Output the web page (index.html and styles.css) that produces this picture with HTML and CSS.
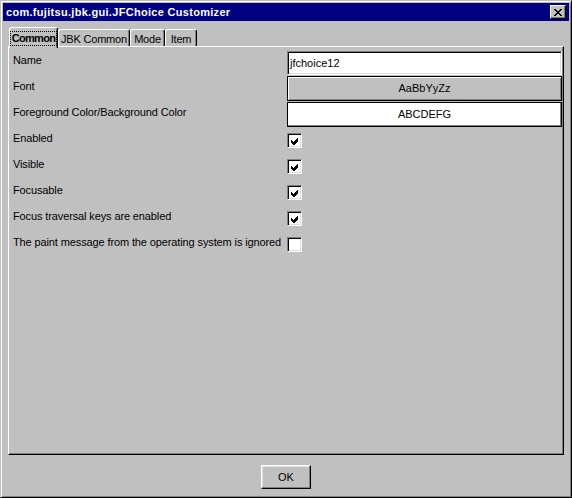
FILE: index.html
```html
<!DOCTYPE html>
<html lang="en">
<head>
    <meta charset="UTF-8">
    <title>com.fujitsu.jbk.gui.JFChoice Customizer</title>
    <link rel="stylesheet" href="styles.css">
</head>
<body>

    <div class="window">
        <!-- 标题栏 -->
        <div class="titlebar">
            <span class="title">com.fujitsu.jbk.gui.JFChoice Customizer</span>
            <div class="close">
                <svg width="8" height="7" viewBox="0 0 8 7" shape-rendering="crispEdges">
                    <path d="M0 0h2v1h1v1h2v-1h1v-1h2v1h-1v1h-1v1h-1v1h1v1h1v1h1v1h-2v-1h-1v-1h-2v1h-1v1h-2v-1h1v-1h1v-1h1v-1h-1v-1h-1v-1h-1z" fill="#000"/>
                </svg>
            </div>
        </div>

        <!-- 标签页 -->
        <div class="tabs">
            <div class="tab active w-common"><span class="focus">Common</span></div>
            <div class="tab w-jbk">JBK Common</div>
            <div class="tab w-mode">Mode</div>
            <div class="tab w-item">Item</div>
        </div>

        <div class="panel">
            <div class="row">
                <div class="label">Name</div>
                <div class="control"><div class="textfield">jfchoice12</div></div>
            </div>
            <div class="row">
                <div class="label">Font</div>
                <div class="control"><div class="fontbtn">AaBbYyZz</div></div>
            </div>
            <div class="row">
                <div class="label">Foreground Color/Background Color</div>
                <div class="control"><div class="colorbtn">ABCDEFG</div></div>
            </div>
            <div class="row">
                <div class="label">Enabled</div>
                <div class="control"><span class="check"><svg width="8" height="7" viewBox="0 0 8 7" shape-rendering="crispEdges"><polygon points="0,2 2,4 6,0 7,0 7,3 3,7 2,7 0,5" fill="#000"/></svg></span></div>
            </div>
            <div class="row">
                <div class="label">Visible</div>
                <div class="control"><span class="check"><svg width="8" height="7" viewBox="0 0 8 7" shape-rendering="crispEdges"><polygon points="0,2 2,4 6,0 7,0 7,3 3,7 2,7 0,5" fill="#000"/></svg></span></div>
            </div>
            <div class="row">
                <div class="label">Focusable</div>
                <div class="control"><span class="check"><svg width="8" height="7" viewBox="0 0 8 7" shape-rendering="crispEdges"><polygon points="0,2 2,4 6,0 7,0 7,3 3,7 2,7 0,5" fill="#000"/></svg></span></div>
            </div>
            <div class="row">
                <div class="label">Focus traversal keys are enabled</div>
                <div class="control"><span class="check"><svg width="8" height="7" viewBox="0 0 8 7" shape-rendering="crispEdges"><polygon points="0,2 2,4 6,0 7,0 7,3 3,7 2,7 0,5" fill="#000"/></svg></span></div>
            </div>
            <div class="row">
                <div class="label">The paint message from the operating system is ignored</div>
                <div class="control"><span class="check"></span></div>
            </div>
        </div>

        <!-- 底部按钮 -->
        <div class="footer">
            <div class="btn">OK</div>
        </div>
    </div>

</body>
</html>
```

FILE: styles.css
```css
body {
    margin: 0;
    padding: 0;
    font-family: "Liberation Sans", Arial, sans-serif;
    font-size: 11px;
    color: #000;
    background-color: #c0c0c0;
}

/* 窗口外框 */
.window {
    width: 572px;
    height: 498px;
    box-sizing: border-box;
    border: 1px solid;
    border-color: #c0c0c0 #000 #000 #c0c0c0;
    box-shadow: inset 1px 1px #fff, inset -1px -1px #808080;
    padding: 2px;
    background-color: #c0c0c0;
    display: flex;
    flex-direction: column;
}

/* 标题栏 */
.titlebar {
    height: 18px;
    background-color: #000080;
    color: #fff;
    display: flex;
    align-items: center;
    justify-content: space-between;
    padding: 0 3px 0 3px;
}

.title {
    font-weight: bold;
    font-size: 11px;
    letter-spacing: 0.3px;
}

.close {
    width: 16px;
    height: 14px;
    box-sizing: border-box;
    background-color: #c0c0c0;
    border: 1px solid;
    border-color: #fff #000 #000 #fff;
    box-shadow: inset -1px -1px #808080;
    display: flex;
    align-items: center;
    justify-content: center;
}

/* 标签页 */
.tabs {
    display: flex;
    align-items: flex-end;
    height: 19px;
    margin: 6px 5px 0 5px;
    padding-left: 1px;
}

.tab {
    height: 17px;
    box-sizing: border-box;
    border-top: 1px solid #fff;
    border-left: 1px solid #fff;
    border-right: 1px solid #000;
    border-radius: 3px 3px 0 0;
    box-shadow: inset -1px 0 #808080;
    display: flex;
    align-items: center;
    justify-content: center;
    background-color: #c0c0c0;
    letter-spacing: -0.2px;
    padding-top: 1px;
}

.tab.active {
    height: 21px;
    margin-bottom: -2px;
    position: relative;
    z-index: 1;
    font-weight: bold;
    padding: 1px 0 1px 0;
    letter-spacing: -0.7px;
}

.focus {
    outline: 1px dotted #000;
    padding: 0 1px;
    line-height: 13px;
}

.w-common { width: 49px; }
.w-jbk { width: 72px; }
.w-mode { width: 35px; }
.w-item { width: 32px; }

/* 内容面板 */
.panel {
    flex: 1;
    margin: 0 5px;
    border: 1px solid;
    border-color: #fff #000 #000 #fff;
    box-shadow: inset -1px -1px #808080;
    padding: 3px 1px 0 1px;
}

.row {
    display: flex;
    height: 26px;
}

.label {
    width: 277px;
    box-sizing: border-box;
    padding: 4px 0 0 3px;
    line-height: 13px;
    white-space: nowrap;
    letter-spacing: -0.12px;
}

.control {
    flex: 1;
}

.textfield {
    height: 24px;
    margin-top: 1px;
    box-sizing: border-box;
    background-color: #fff;
    border: 1px solid;
    border-color: #808080 #fff #fff #808080;
    box-shadow: inset 1px 1px #000, inset -1px -1px #dfdfdf;
    padding-left: 2px;
    line-height: 22px;
}

.fontbtn,
.colorbtn {
    height: 25px;
    box-sizing: border-box;
    border: 1px solid #000;
    text-align: center;
    line-height: 23px;
}

.fontbtn {
    background-color: #c0c0c0;
    box-shadow: inset 1px 1px #fff, inset -1px -1px #808080;
}

.colorbtn {
    background-color: #fff;
    box-shadow: inset -1px -1px #808080;
}

/* 复选框 */
.check {
    display: flex;
    align-items: center;
    justify-content: center;
    width: 15px;
    height: 15px;
    margin: 5px 0 0 0;
    box-sizing: border-box;
    background-color: #fff;
    border: 1px solid;
    border-color: #808080 #fff #fff #808080;
    box-shadow: inset 1px 1px #000, inset -1px -1px #dfdfdf;
    padding: 1px 0 0 1px;
}

/* 底部 */
.footer {
    height: 40px;
    box-sizing: border-box;
    padding-top: 10px;
    display: flex;
    justify-content: center;
}

.btn {
    width: 50px;
    height: 24px;
    box-sizing: border-box;
    border: 1px solid;
    border-color: #fff #000 #000 #fff;
    box-shadow: inset -1px -1px #808080, inset 1px 1px #dfdfdf;
    text-align: center;
    line-height: 22px;
}
```
